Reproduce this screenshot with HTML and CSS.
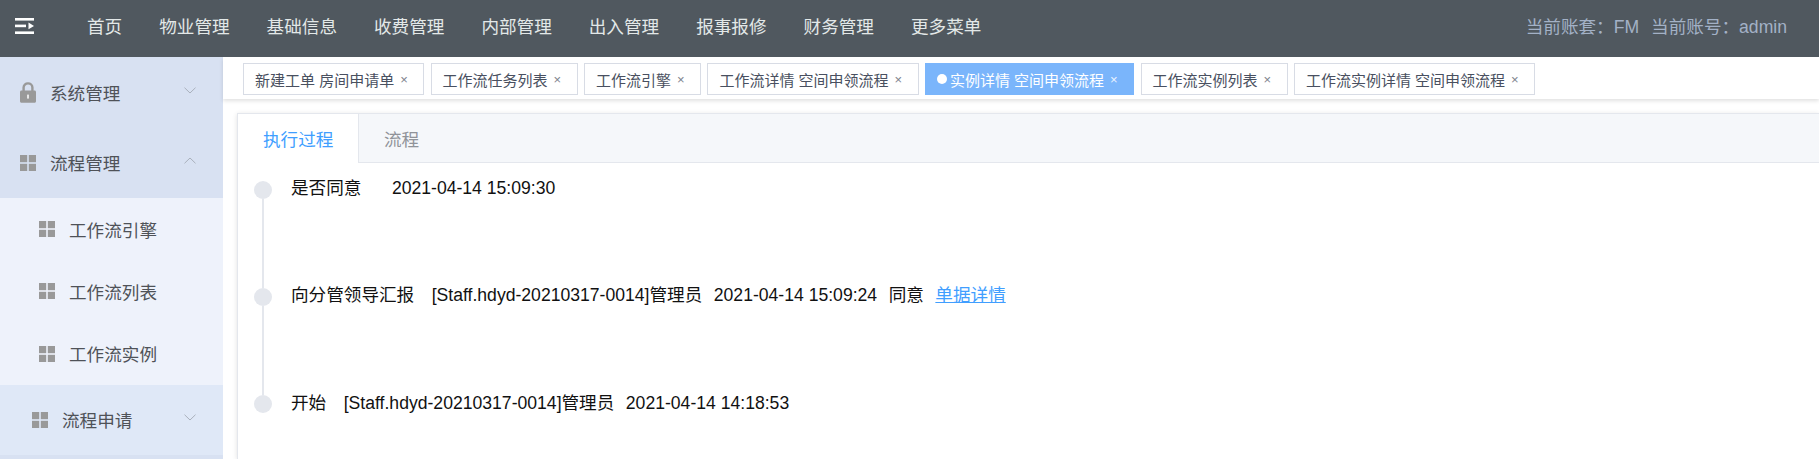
FILE: index.html
```html
<!DOCTYPE html>
<html lang="zh-CN">
<head>
  <meta charset="UTF-8">
  <title>实例详情</title>
  <link rel="stylesheet" href="styles.css">
</head>
<body>
  <svg class="defs" width="0" height="0">
    <symbol id="grid" viewBox="0 0 16 16">
      <rect x="0" y="0" width="7.2" height="7.2"/>
      <rect x="8.8" y="0" width="7.2" height="7.2"/>
      <rect x="0" y="8.8" width="7.2" height="7.2"/>
      <rect x="8.8" y="8.8" width="7.2" height="7.2"/>
    </symbol>
    <symbol id="down" viewBox="0 0 12 7">
      <path d="M0.5 0.7L6 6L11.5 0.7" fill="none" stroke="#a9b0bc" stroke-width="1"/>
    </symbol>
    <symbol id="up" viewBox="0 0 12 7">
      <path d="M0.5 6.3L6 1L11.5 6.3" fill="none" stroke="#a9b0bc" stroke-width="1"/>
    </symbol>
  </svg>

  <header class="topbar">
    <svg class="menu-toggle" viewBox="0 0 19 16">
      <rect x="0" y="0" width="19" height="2.6" fill="#fff"/>
      <rect x="0" y="6.6" width="11" height="2.6" fill="#fff"/>
      <path d="M13.5 4.6L19 7.9L13.5 11.2Z" fill="#fff"/>
      <rect x="0" y="13.4" width="19" height="2.6" fill="#fff"/>
    </svg>
    <nav class="topnav">
      <a>首页</a>
      <a>物业管理</a>
      <a>基础信息</a>
      <a>收费管理</a>
      <a>内部管理</a>
      <a>出入管理</a>
      <a>报事报修</a>
      <a>财务管理</a>
      <a>更多菜单</a>
    </nav>
    <div class="account">
      <span>当前账套：FM</span>
      <span>当前账号：admin</span>
    </div>
  </header>

  <div class="layout">
    <aside class="sidebar">
      <div class="side-group">
        <svg class="side-icon" viewBox="0 0 16 21">
          <path d="M3.6 9V5.6C3.6 3.1 5.5 1.4 8 1.4S12.4 3.1 12.4 5.6V9" fill="none" stroke="#999" stroke-width="2.4"/>
          <path d="M1.5 8.4H14.5C15.4 8.4 16 9 16 9.900V19.300C16 20.200 15.400 20.800 14.500 20.800H1.500C0.600 20.800 0 20.200 0 19.300V9.900C0 9 0.600 8.400 1.500 8.400Z" fill="#999"/>
          <rect x="7" y="12.600" width="2" height="4" fill="#e6e6e6"/>
        </svg>
        <span class="side-label">系统管理</span>
        <svg class="chevron"><use href="#down"/></svg>
      </div>
      <div class="side-group">
        <svg class="side-icon"><use href="#grid"/></svg>
        <span class="side-label">流程管理</span>
        <svg class="chevron"><use href="#up"/></svg>
      </div>
      <div class="side-sub">
        <svg class="side-icon"><use href="#grid"/></svg>
        <span class="side-label">工作流引擎</span>
      </div>
      <div class="side-sub">
        <svg class="side-icon"><use href="#grid"/></svg>
        <span class="side-label">工作流列表</span>
      </div>
      <div class="side-sub">
        <svg class="side-icon"><use href="#grid"/></svg>
        <span class="side-label">工作流实例</span>
      </div>
      <div class="side-group side-group-light">
        <svg class="side-icon"><use href="#grid"/></svg>
        <span class="side-label">流程申请</span>
        <svg class="chevron"><use href="#down"/></svg>
      </div>
      <div class="side-rest"></div>
    </aside>

    <main class="content">
      <div class="pagetabs">
        <a class="pagetab">新建工单 房间申请单<i class="close">×</i></a>
        <a class="pagetab">工作流任务列表<i class="close">×</i></a>
        <a class="pagetab">工作流引擎<i class="close">×</i></a>
        <a class="pagetab">工作流详情 空间申领流程<i class="close">×</i></a>
        <a class="pagetab active"><b class="live-dot"></b>实例详情 空间申领流程<i class="close">×</i></a>
        <a class="pagetab">工作流实例列表<i class="close">×</i></a>
        <a class="pagetab">工作流实例详情 空间申领流程<i class="close">×</i></a>
      </div>

      <section class="card">
        <div class="card-tabs">
          <a class="card-tab active">执行过程</a>
          <a class="card-tab">流程</a>
        </div>
        <ul class="timeline">
          <li class="tl-row">
            <div class="tl-axis"><span class="tl-dot"></span><span class="tl-line"></span></div>
            <div class="tl-text">
              <span class="gap-wide">是否同意</span>
              <span>2021-04-14 15:09:30</span>
            </div>
          </li>
          <li class="tl-row">
            <div class="tl-axis"><span class="tl-dot"></span><span class="tl-line"></span></div>
            <div class="tl-text">
              <span class="gap-mid">向分管领导汇报</span>
              <span class="gap-small">[Staff.hdyd-20210317-0014]管理员</span>
              <span class="gap-small">2021-04-14 15:09:24</span>
              <span class="gap-small">同意</span>
              <a class="tl-link">单据详情</a>
            </div>
          </li>
          <li class="tl-row tl-row-last">
            <div class="tl-axis"><span class="tl-dot"></span></div>
            <div class="tl-text">
              <span class="gap-mid">开始</span>
              <span class="gap-small">[Staff.hdyd-20210317-0014]管理员</span>
              <span>2021-04-14 14:18:53</span>
            </div>
          </li>
        </ul>
      </section>
    </main>
  </div>
</body>
</html>
```

FILE: styles.css
```css
* {
  box-sizing: border-box;
}
html, body {
  height: 100%;
}
body {
  margin: 0;
  overflow: hidden;
  background: #fff;
  font-family: "Liberation Sans", "Noto Sans CJK SC", sans-serif;
  font-size: 17.6px;
}
.defs {
  position: absolute;
}

/* top bar */
.topbar {
  display: flex;
  align-items: center;
  height: 57px;
  padding: 0 32px 0 15px;
  background: #50585f;
}
.menu-toggle {
  width: 19px;
  height: 16px;
  margin-top: -6px;
}
.topnav {
  display: flex;
  gap: 37px;
  margin-left: 53px;
  margin-top: -7px;
  color: #e3e8e8;
}
.account {
  display: flex;
  gap: 12px;
  margin-left: auto;
  margin-top: -7px;
  color: #a3b1c6;
}

/* side menu */
.layout {
  display: flex;
  height: 402px;
  overflow: hidden;
}
.sidebar {
  flex: none;
  width: 223px;
  display: flex;
  flex-direction: column;
  background: #d8e1f2;
  color: #4f5258;
}
.side-group {
  flex: none;
  display: flex;
  align-items: center;
  height: 70.500px;
  padding: 0 27px 0 20px;
}
.side-group-light {
  height: 70px;
  padding-left: 32px;
  background: #dfe8f7;
}
.side-sub {
  flex: none;
  display: flex;
  align-items: center;
  height: 62.300px;
  padding-left: 39px;
  background: #eef2fb;
}
.side-rest {
  flex: 1;
  background: #d8e1f2;
}
.side-icon {
  flex: none;
  width: 16px;
  height: 16px;
  margin-right: 14px;
  fill: #999;
}
.side-group:first-child .side-icon {
  height: 21px;
}
.chevron {
  width: 12px;
  height: 7px;
  margin-left: auto;
  margin-top: -4px;
}

/* page tabs */
.content {
  flex: 1;
  min-width: 0;
}
.pagetabs {
  display: flex;
  gap: 6.400px;
  height: 42px;
  padding: 6px 0 4px 20px;
  background: #fff;
  box-shadow: 0 2px 4px rgba(0, 0, 0, 0.12);
}
.pagetab {
  display: flex;
  align-items: center;
  height: 32px;
  padding: 0 15px 0 11px;
  border: 1px solid #d8dce5;
  color: #495060;
  font-size: 15px;
}
.pagetab.active {
  border-color: #7ab5fb;
  background: #7ab5fb;
  color: #fff;
}
.live-dot {
  width: 10px;
  height: 10px;
  margin: 0 3px 0 0;
  border-radius: 50%;
  background: #fff;
}
.close {
  margin-left: 6px;
  width: 8px;
  font-style: normal;
  font-size: 13px;
  color: #7d828c;
}
.pagetab.active .close {
  color: #eaf3ff;
}

/* card */
.card {
  margin: 14px 0 0 14px;
  height: 346px;
  background: #fff;
  border: 1px solid #e4e7ed;
  border-right: none;
  border-bottom: none;
  box-shadow: 0 1px 5px rgba(0, 0, 0, 0.12);
}
.card-tabs {
  display: flex;
  height: 49px;
  background: #f5f7fa;
  border-bottom: 1px solid #e4e7ed;
}
.card-tab {
  display: flex;
  align-items: center;
  padding: 0 25px;
  color: #909399;
  white-space: nowrap;
}
.card-tab.active {
  width: 121px;
  height: 49px;
  background: #fff;
  border-right: 1px solid #e4e7ed;
  color: #409eff;
}

/* timeline */
.timeline {
  margin: 0;
  padding: 18px 0 0 16px;
  list-style: none;
}
.tl-row {
  display: flex;
  height: 107px;
}
.tl-row-last {
  height: 60px;
}
.tl-row-last .tl-text {
  margin-top: -1px;
}
.tl-axis {
  flex: none;
  display: flex;
  flex-direction: column;
  align-items: center;
  width: 18px;
  margin-right: 19px;
}
.tl-dot {
  flex: none;
  width: 18px;
  height: 18px;
  border-radius: 50%;
  background: #e4e7ed;
}
.tl-line {
  flex: 1;
  width: 2px;
  background: #e4e7ed;
}
.tl-text {
  display: flex;
  align-items: flex-start;
  margin-top: -2px;
  line-height: 18px;
  color: #111;
}
.gap-wide {
  margin-right: 30.500px;
}
.gap-mid {
  margin-right: 17.500px;
}
.gap-small {
  margin-right: 11.500px;
}
.tl-link {
  color: #409eff;
  text-decoration: underline;
}
```
